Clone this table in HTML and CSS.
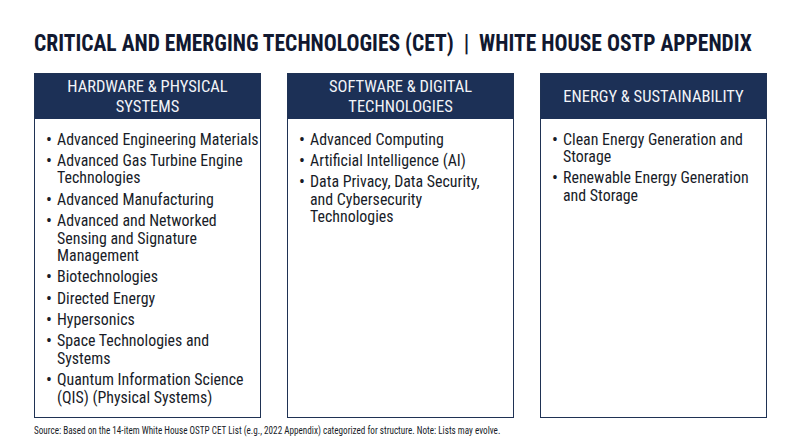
FILE: index.html
```html
<!DOCTYPE html>
<html lang="en">
<head>
<meta charset="utf-8">
<title>CET</title>
<link rel="stylesheet" href="styles.css">
</head>
<body>
<div class="page">
  <h1 class="title">CRITICAL AND EMERGING TECHNOLOGIES (CET)&nbsp; |&nbsp; WHITE HOUSE OSTP APPENDIX</h1>
  <div class="columns">
    <section class="card">
      <header class="card-head">HARDWARE &amp; PHYSICAL<br>SYSTEMS</header>
      <ul class="list">
        <li>Advanced Engineering Materials</li>
        <li>Advanced Gas Turbine Engine Technologies</li>
        <li>Advanced Manufacturing</li>
        <li>Advanced and Networked Sensing and Signature Management</li>
        <li>Biotechnologies</li>
        <li>Directed Energy</li>
        <li>Hypersonics</li>
        <li>Space Technologies and Systems</li>
        <li>Quantum Information Science (QIS) (Physical Systems)</li>
      </ul>
    </section>
    <section class="card">
      <header class="card-head">SOFTWARE &amp; DIGITAL<br>TECHNOLOGIES</header>
      <ul class="list list-narrow">
        <li>Advanced Computing</li>
        <li>Artificial Intelligence (AI)</li>
        <li>Data Privacy, Data Security, and Cybersecurity Technologies</li>
      </ul>
    </section>
    <section class="card">
      <header class="card-head">ENERGY &amp; SUSTAINABILITY</header>
      <ul class="list">
        <li>Clean Energy Generation and Storage</li>
        <li>Renewable Energy Generation and Storage</li>
      </ul>
    </section>
  </div>
  <p class="source">Source: Based on the 14-item White House OSTP CET List (e.g., 2022 Appendix) categorized for structure. Note: Lists may evolve.</p>
</div>
</body>
</html>
```
FILE: styles.css
```css
html, body {
  margin: 0;
  padding: 0;
  background: #ffffff;
}
body {
  font-family: "Roboto Condensed", Roboto, "Liberation Sans", sans-serif;
  color: #181c28;
}
.page {
  width: 800px;
  height: 447px;
  padding: 29px 34px 0 34px;
  box-sizing: border-box;
  overflow: hidden;
}
.title {
  margin: 0;
  font-size: 23.5px;
  line-height: 28px;
  font-weight: 700;
  color: #111830;
  white-space: nowrap;
  transform: scaleX(0.917);
  transform-origin: left center;
}
.columns {
  margin-top: 16px;
  display: grid;
  grid-template-columns: 227px 227px 227px;
  grid-template-rows: 345px;
  column-gap: 26px;
}
.card {
  border: 1.5px solid #1f3254;
  display: flex;
  flex-direction: column;
  min-height: 0;
}
.card-head {
  background: #1c3056;
  color: #f2f4f8;
  height: 44.5px;
  flex: none;
  display: flex;
  align-items: center;
  justify-content: center;
  text-align: center;
  font-size: 16.5px;
  line-height: 20px;
  padding-top: 1px;
  box-sizing: border-box;
}
.list {
  margin: 0 0 0 21.5px;
  padding: 12px 0 0 0;
  width: 221px;
  list-style: none;
  transform: scaleX(0.92);
  transform-origin: left top;
}
.list-narrow {
  width: 196px;
}
.list li {
  position: relative;
  font-size: 17.3px;
  line-height: 17.7px;
  margin-bottom: 3.5px;
  color: #181c28;
}
.list li::before {
  content: "•";
  position: absolute;
  left: -12px;
  top: 0;
  font-size: 19px;
}
.source {
  margin: 6.4px 0 0 0;
  font-size: 11.3px;
  line-height: 14px;
  color: #181c28;
  white-space: nowrap;
  transform: scaleX(0.81);
  transform-origin: left center;
}
```
